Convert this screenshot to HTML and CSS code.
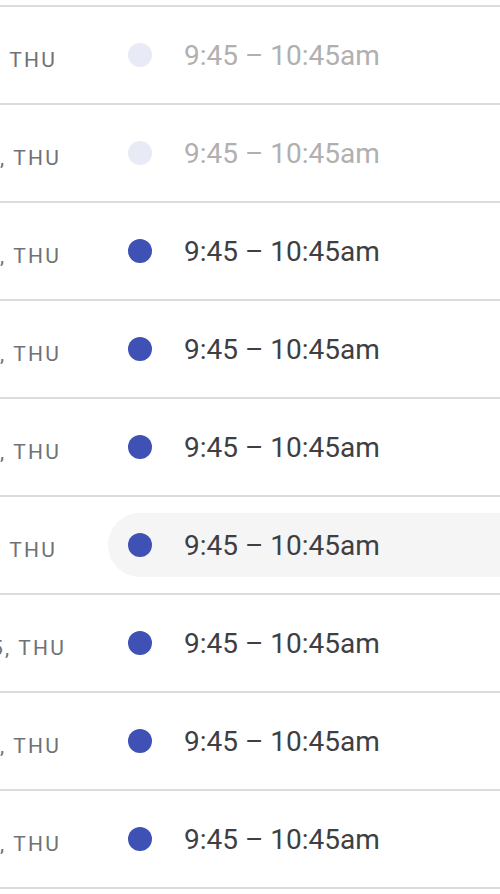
FILE: index.html
```html
<!DOCTYPE html>
<html>
<head>
<meta charset="utf-8">
<link rel="stylesheet" href="styles.css">
</head>
<body>
<ul class="schedule">
  <li class="row"><span class="date">THU</span><div class="event past"><span class="dot"></span><span class="time">9:45 – 10:45am</span></div></li>
  <li class="row"><span class="date dated">OCT 31, THU</span><div class="event past"><span class="dot"></span><span class="time">9:45 – 10:45am</span></div></li>
  <li class="row"><span class="date dated">NOV 7, THU</span><div class="event"><span class="dot"></span><span class="time">9:45 – 10:45am</span></div></li>
  <li class="row"><span class="date dated">NOV 14, THU</span><div class="event"><span class="dot"></span><span class="time">9:45 – 10:45am</span></div></li>
  <li class="row"><span class="date dated">NOV 21, THU</span><div class="event"><span class="dot"></span><span class="time">9:45 – 10:45am</span></div></li>
  <li class="row"><span class="date">THU</span><div class="event active"><span class="dot"></span><span class="time">9:45 – 10:45am</span></div></li>
  <li class="row"><span class="date wide">DEC 5, THU</span><div class="event"><span class="dot"></span><span class="time">9:45 – 10:45am</span></div></li>
  <li class="row"><span class="date dated">DEC 12, THU</span><div class="event"><span class="dot"></span><span class="time">9:45 – 10:45am</span></div></li>
  <li class="row"><span class="date dated">DEC 19, THU</span><div class="event"><span class="dot"></span><span class="time">9:45 – 10:45am</span></div></li>
</ul>
</body>
</html>
```
FILE: styles.css
```css
html, body {
  margin: 0;
  padding: 0;
  background: #ffffff;
  overflow: hidden;
}
body {
  width: 500px;
  height: 894px;
  font-family: Roboto, "Noto Sans", sans-serif;
}
.schedule {
  list-style: none;
  margin: 0;
  padding: 5px 0 0 0;
}
.row {
  display: flex;
  align-items: center;
  height: 96px;
  border-top: 2px solid #dadce0;
}
.row:last-child {
  border-bottom: 2px solid #dadce0;
}
.date {
  flex: none;
  width: 160px;
  margin-left: -103px;
  text-align: right;
  white-space: nowrap;
  overflow: hidden;
  font-size: 21px;
  letter-spacing: 2.2px;
  color: #6f7276;
  font-weight: 400;
  padding-top: 10px;
}
.date.dated {
  margin-left: -99px;
}
.date.wide {
  margin-left: -94px;
}
.row .event {
  flex: 1;
  display: flex;
  align-items: center;
  height: 64px;
  margin-left: 51px;
  padding-left: 20px;
  border-radius: 32px 0 0 32px;
}
.date.dated + .event {
  margin-left: 47px;
}
.date.wide + .event {
  margin-left: 42px;
}
.event.active {
  background: #f5f5f5;
}
.dot {
  flex: none;
  width: 24px;
  height: 24px;
  border-radius: 50%;
  background: #3f51b5;
  margin-right: 33px;
}
.time {
  font-size: 28px;
  color: #3c4043;
  white-space: nowrap;
  margin-left: -1px;
}
.event.past .dot {
  background: #e8eaf6;
}
.event.past .time {
  color: #b0b0b0;
}
```
